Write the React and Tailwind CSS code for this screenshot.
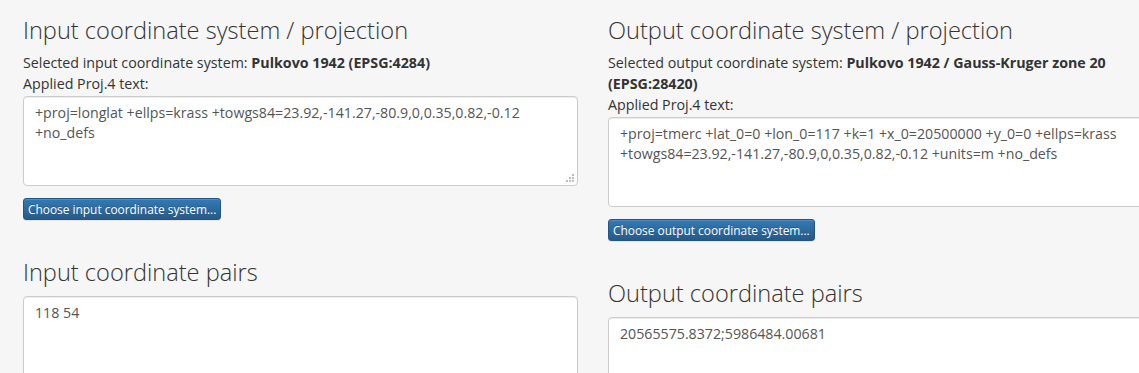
const inputProj = '+proj=longlat +ellps=krass +towgs84=23.92,-141.27,-80.9,0,0.35,0.82,-0.12 +no_defs';
const outputProj =
  '+proj=tmerc +lat_0=0 +lon_0=117 +k=1 +x_0=20500000 +y_0=0 +ellps=krass +towgs84=23.92,-141.27,-80.9,0,0.35,0.82,-0.12 +units=m +no_defs';

function Heading({ children }) {
  return <h2 className="text-[23.6px] leading-[28px] font-light text-[#333]">{children}</h2>;
}

function ProjBox({ value }) {
  return (
    <div className="relative mt-[2px]">
      <textarea
        readOnly
        value={value}
        className="block w-full h-[90px] bg-white border border-[#ccc] rounded-[4px] px-[11px] py-[6px] text-[14.2px] leading-[20px] text-[#555] shadow-[inset_0_1px_1px_rgba(0,0,0,0.075)] outline-none resize-none"
      />
      {/* grip dots like the native resize handle */}
      <svg className="absolute right-[4px] bottom-[4px]" width="8" height="8" viewBox="0 0 8 8" fill="#bdbdbd">
        <rect x="6" y="0" width="2" height="2" />
        <rect x="3" y="3" width="2" height="2" />
        <rect x="6" y="3" width="2" height="2" />
        <rect x="0" y="6" width="2" height="2" />
        <rect x="3" y="6" width="2" height="2" />
        <rect x="6" y="6" width="2" height="2" />
      </svg>
    </div>
  );
}

function ChooseButton({ children }) {
  return (
    <button
      type="button"
      className="mt-[12px] h-[22px] px-[4px] text-[11.9px] leading-[18px] text-white rounded-[3px] border border-[#245580] bg-gradient-to-b from-[#337ab7] to-[#265a88] [text-shadow:0_-1px_0_rgba(0,0,0,0.2)] shadow-[inset_0_1px_0_rgba(255,255,255,0.15),0_1px_1px_rgba(0,0,0,0.075)]"
    >
      {children}
    </button>
  );
}

function PairsBox({ value }) {
  return (
    <textarea
      readOnly
      value={value}
      className="mt-[10px] block w-full h-[120px] bg-white border border-[#ccc] rounded-[4px] px-[11px] py-[6px] text-[14.2px] leading-[20px] text-[#555] shadow-[inset_0_1px_1px_rgba(0,0,0,0.075)] outline-none resize-none"
    />
  );
}

export default function App() {
  return (
    <div className="w-full h-[373px] overflow-hidden bg-[#f6f6f6] font-['Open_Sans',sans-serif] text-[#333]">
      <div className="w-[1170px] pl-[23px] pt-[16px] grid grid-cols-[555px_555px] gap-x-[30px]">
        <div>
          <Heading>Input coordinate system / projection</Heading>
          <div className="mt-[8px] text-[14.25px] leading-[21px]">
            <p>
              Selected input coordinate system: <b className="font-bold">Pulkovo 1942 (EPSG:4284)</b>
            </p>
            <p>Applied Proj.4 text:</p>
          </div>
          <ProjBox value={inputProj} />
          <ChooseButton>Choose input coordinate system...</ChooseButton>
          <div className="mt-[38px]">
            <Heading>Input coordinate pairs</Heading>
          </div>
          <PairsBox value="118 54" />
        </div>
        <div>
          <Heading>Output coordinate system / projection</Heading>
          <div className="mt-[8px] text-[14.25px] leading-[21px]">
            <p>
              Selected output coordinate system:{' '}
              <b className="font-bold">Pulkovo 1942 / Gauss-Kruger zone 20 (EPSG:28420)</b>
            </p>
            <p>Applied Proj.4 text:</p>
          </div>
          <ProjBox value={outputProj} />
          <ChooseButton>Choose output coordinate system...</ChooseButton>
          <div className="mt-[38px]">
            <Heading>Output coordinate pairs</Heading>
          </div>
          <PairsBox value="20565575.8372;5986484.00681" />
        </div>
      </div>
    </div>
  );
}
